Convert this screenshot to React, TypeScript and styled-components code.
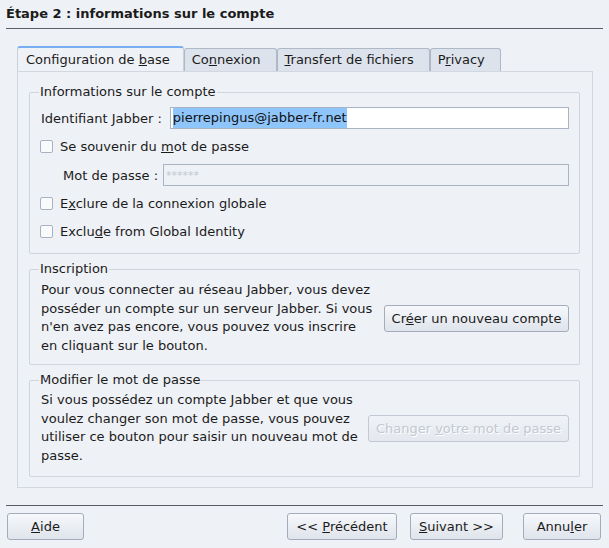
import React from "react";
import styled, { createGlobalStyle } from "styled-components";

const Global = createGlobalStyle`
  html, body { margin: 0; padding: 0; background: #eef1f6; }
  body { font-family: "DejaVu Sans", "Liberation Sans", sans-serif; font-size: 13px; color: #1b1b1b; }
  * { box-sizing: border-box; }
`;

const Page = styled.div`
  width: 609px;
  height: 548px;
  background: #eef1f6;
  display: flex;
  flex-direction: column;
`;

const Header = styled.div`
  margin: 0 6px;
  height: 29px;
  border-bottom: 1px solid #5a5d63;
  display: flex;
  align-items: center;
  padding-bottom: 1px;
  font-weight: bold;
  font-size: 13px;
`;

const Body = styled.div`
  padding: 17px 16px 0 17px;
  display: flex;
  flex-direction: column;
`;

const TabBar = styled.div`
  display: flex;
  align-items: flex-end;
  height: 26px;
  gap: 0;
`;

const Tab = styled.div<{ $active?: boolean }>`
  height: ${(p) => (p.$active ? 26 : 24)}px;
  padding: ${(p) => (p.$active ? "0 13px 2px 8px" : "0 15px 2px 7px")};
  display: flex;
  align-items: center;
  background: ${(p) => (p.$active ? "#eef1f6" : "#dde3ec")};
  border: 1px solid ${(p) => (p.$active ? "#c9d0da" : "#aeb8c6")};
  border-bottom: none;
  border-top: ${(p) => (p.$active ? "2px solid #78adf2" : "1px solid #aeb8c6")};
  border-radius: 3px 3px 0 0;
  white-space: nowrap;
`;

const Panel = styled.div`
  border: 1px solid #d3d8e0;
  margin-top: -1px;
  height: 417px;
  padding: 12px 12px 0 11px;
  display: flex;
  flex-direction: column;
  gap: 7px;
`;

const Group = styled.fieldset`
  margin: 0;
  border: 1px solid #d0d5dd;
  border-radius: 2px;
  padding: 0 10px 0 11px;
  min-width: 0;
`;

const Legend = styled.legend`
  padding: 0 1px;
  margin-left: -2px;
  height: 16px;
  line-height: 16px;
`;

const Rows = styled.div`
  display: flex;
  flex-direction: column;
  gap: 6px;
  padding: 7px 0 11px;
`;

const Row = styled.div<{ $indent?: number; $gap: number; $mt?: number }>`
  display: flex;
  align-items: center;
  height: 22px;
  gap: ${(p) => p.$gap}px;
  padding-left: ${(p) => p.$indent ?? 0}px;
  margin-top: ${(p) => p.$mt ?? 0}px;
`;

const CheckRow = styled.label`
  display: flex;
  align-items: center;
  height: 22px;
  gap: 7px;
  margin-left: -1px;
`;

const Box = styled.span`
  width: 13px;
  height: 13px;
  border: 1px solid #a9b2c0;
  border-radius: 2px;
  background: #f9fafc;
  flex: none;
`;

const Input = styled.div<{ $disabled?: boolean }>`
  flex: 1;
  height: 22px;
  border: 1px solid #aab4c4;
  background: ${(p) => (p.$disabled ? "#eef1f6" : "#ffffff")};
  display: flex;
  align-items: center;
  padding-left: 2px;
  color: ${(p) => (p.$disabled ? "#c4c8ce" : "#111")};
  font-size: ${(p) => (p.$disabled ? "11px" : "13px")};
`;

const Selected = styled.span`
  background: #8ec5fb;
  line-height: 20px;
`;

const Split = styled.div<{ $pt: number; $pb: number }>`
  display: flex;
  align-items: center;
  justify-content: space-between;
  padding: ${(p) => p.$pt}px 0 ${(p) => p.$pb}px 0;
`;

const Para = styled.p`
  margin: 0;
  line-height: 18.5px;
  width: 332px;
`;

const Button = styled.div<{ $w?: number; $disabled?: boolean }>`
  height: 27px;
  width: ${(p) => (p.$w ? `${p.$w}px` : "auto")};
  padding: 0 8px;
  display: flex;
  align-items: center;
  justify-content: center;
  border: 1px solid ${(p) => (p.$disabled ? "#c2c9d4" : "#a3acba")};
  border-radius: 3px;
  background: ${(p) =>
    p.$disabled
      ? "linear-gradient(#eff2f6, #e4e8ee)"
      : "linear-gradient(#f6f8fb, #dfe4eb)"};
  color: ${(p) => (p.$disabled ? "#c3c8d0" : "#1b1b1b")};
  text-shadow: ${(p) => (p.$disabled ? "1px 1px 0 #ffffff" : "none")};
  white-space: pre;
  flex: none;
`;

const Footer = styled.div`
  margin: 17px 6px 0;
  border-top: 1px solid #5a5d63;
  padding: 7px 2px 0 1px;
  display: flex;
  align-items: center;
`;

const Spacer = styled.div`
  flex: 1;
`;

const Gap = styled.div<{ $w: number }>`
  width: ${(p) => p.$w}px;
  flex: none;
`;

export default function App() {
  return (
    <Page>
      <Global />
      <Header>Étape 2 : informations sur le compte</Header>
      <Body>
        <TabBar>
          <Tab $active>
            <span>
              Configuration de <u>b</u>ase
            </span>
          </Tab>
          <Tab>
            <span>
              Co<u>n</u>nexion
            </span>
          </Tab>
          <Tab>
            <span>
              <u>T</u>ransfert de fichiers
            </span>
          </Tab>
          <Tab>
            <span>
              P<u>r</u>ivacy
            </span>
          </Tab>
        </TabBar>
        <Panel>
          <Group>
            <Legend>Informations sur le compte</Legend>
            <Rows>
              <Row $gap={8}>
                <span>
                  Identifiant <u>J</u>abber :
                </span>
                <Input>
                  <Selected>pierrepingus@jabber-fr.net</Selected>
                </Input>
              </Row>
              <CheckRow>
                <Box />
                <span>
                  Se souvenir du <u>m</u>ot de passe
                </span>
              </CheckRow>
              <Row $indent={22} $gap={5} $mt={1}>
                <span>Mot de passe :</span>
                <Input $disabled>******</Input>
              </Row>
              <CheckRow>
                <Box />
                <span>
                  E<u>x</u>clure de la connexion globale
                </span>
              </CheckRow>
              <CheckRow>
                <Box />
                <span>
                  Exclu<u>d</u>e from Global Identity
                </span>
              </CheckRow>
            </Rows>
          </Group>
          <Group>
            <Legend>Inscription</Legend>
            <Split $pt={4} $pb={9}>
              <Para>
                Pour vous connecter au réseau Jabber, vous devez posséder un
                compte sur un serveur Jabber. Si vous n'en avez pas encore,
                vous pouvez vous inscrire en cliquant sur le bouton.
              </Para>
              <Button $w={185}>
                <span>
                  Cr<u>é</u>er un nouveau compte
                </span>
              </Button>
            </Split>
          </Group>
          <Group>
            <Legend>Modifier le mot de passe</Legend>
            <Split $pt={3} $pb={11}>
              <Para>
                Si vous possédez un compte Jabber et que vous voulez changer
                son mot de passe, vous pouvez utiliser ce bouton pour saisir un
                nouveau mot de passe.
              </Para>
              <Button $w={201} $disabled>
                <span>
                  Changer <u>v</u>otre mot de passe
                </span>
              </Button>
            </Split>
          </Group>
        </Panel>
      </Body>
      <Footer>
        <Button $w={77}>
          <span>
            <u>A</u>ide
          </span>
        </Button>
        <Spacer />
        <Button $w={110}>
          <span>
            &lt;&lt; <u>P</u>récédent
          </span>
        </Button>
        <Gap $w={13} />
        <Button $w={93}>
          <span>
            <u>S</u>uivant &gt;&gt;
          </span>
        </Button>
        <Gap $w={20} />
        <Button $w={78}>
          <span>
            Annu<u>l</u>er
          </span>
        </Button>
      </Footer>
    </Page>
  );
}
